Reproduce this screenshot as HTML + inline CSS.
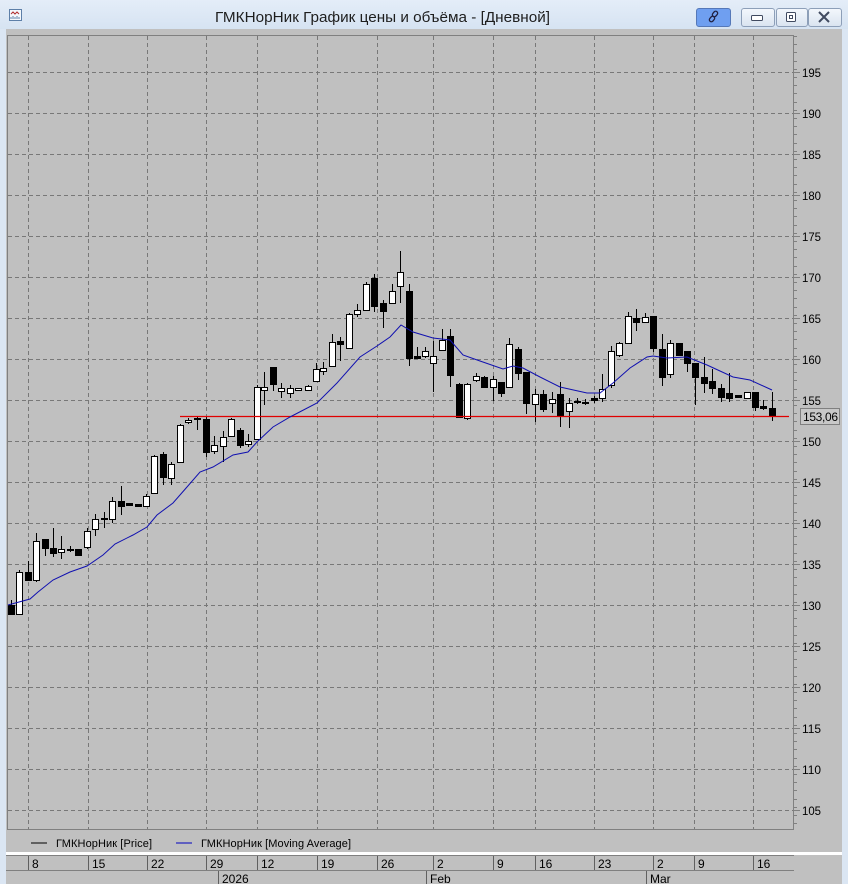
<!DOCTYPE html>
<html><head><meta charset="utf-8"><style>
html,body{margin:0;padding:0;width:848px;height:884px;overflow:hidden;background:#dbe6f3;font-family:"Liberation Sans",sans-serif}
#t{position:absolute;left:0;top:0;width:848px;height:29px;background:linear-gradient(#e4edf8,#d6e3f2)}
.b{position:absolute;top:8px;height:17px;border:1px solid #8d9fb8;border-radius:3px;background:linear-gradient(#f3f7fc,#dae4f0)}
svg{position:absolute;left:0;top:0}
</style></head><body>
<div id="t">
<div class="b" style="left:696px;width:33px;background:#6f9ff0;border-color:#5578b8"></div>
<div class="b" style="left:741px;width:32px"></div>
<div class="b" style="left:776px;width:30px"></div>
<div class="b" style="left:808px;width:32px"></div>
</div>
<svg id="s" width="848" height="884" xmlns="http://www.w3.org/2000/svg">
<text x="215" y="22" font-size="15" fill="#1e1e1e" textLength="335" lengthAdjust="spacingAndGlyphs">ГМКНорНик График цены и объёма - [Дневной]</text>
<rect x="9.5" y="9.5" width="12" height="11" fill="#f4f8fc" stroke="#5d7fa8"/>
<path d="M11 14 l2 -2 2 2 2 -2 2 2" fill="none" stroke="#b03030"/>
<path d="M11 19v-2M13 19v-3M15 19v-2M17 19v-3M19 19v-2" stroke="#5d7fa8"/>
<g fill="none" stroke="#202040" stroke-width="1.3">
<rect x="710" y="16" width="4" height="6" rx="2" transform="rotate(40 712 19)"/>
<rect x="713" y="11" width="4" height="6" rx="2" transform="rotate(40 715 14)"/>
</g>
<rect x="751.5" y="15.5" width="11" height="5" rx="1" fill="#fff" stroke="#404a60"/>
<rect x="786.5" y="12.5" width="9" height="9" rx="1" fill="#fff" stroke="#404a60"/>
<rect x="789.5" y="15.5" width="3" height="3" fill="none" stroke="#404a60"/>
<path d="M819 12 l10 10 M829 12 l-10 10" stroke="#404a60" stroke-width="2"/>
<rect x="6" y="29" width="836" height="855" fill="#c0c0c0"/>
<g id="grid"></g>
<rect x="7.5" y="35.5" width="786" height="794" fill="none" stroke="#808080"/>
<g id="c"></g>
<line x1="180" y1="416.5" x2="789" y2="416.5" stroke="#e00000" stroke-width="1.2"/>
<polyline fill="none" stroke="#1010b0" stroke-width="1" points="8,605 30,599 38,592 53,580 70,572 87,566 103,555 115,544 133,535 147,527 157,515 173,503 187,487 200,472 213,467 233,455 248,452 257,442 273,427 290,417 317,403 337,383 360,357 377,346 390,337 401,325 413,332 433,338 450,340 463,355 480,361 503,369 513,366 523,368 540,377 560,387 587,393 600,393 613,383 630,368 647,357 653,356 667,358 687,357 707,365 733,377 750,380 772,390"/>
<g id="ax" font-size="12" fill="#000"></g>
<rect x="800.5" y="408.5" width="39" height="16" fill="#c8c8c8" stroke="#808080"/>
<text x="803" y="421" font-size="12" textLength="35">153,06</text>
<line x1="31" y1="843" x2="47" y2="843" stroke="#000"/>
<text x="56" y="847" font-size="11" textLength="96">ГМКНорНик [Price]</text>
<line x1="176" y1="843" x2="192" y2="843" stroke="#0000c0"/>
<text x="201" y="847" font-size="11" textLength="150">ГМКНорНик [Moving Average]</text>
<rect x="6" y="852" width="836" height="3" fill="#fff"/>
<line x1="6" y1="855.5" x2="794" y2="855.5" stroke="#808080"/>
<line x1="6" y1="870.5" x2="794" y2="870.5" stroke="#808080"/>
<g id="tx" font-size="12"></g>
</svg>
<script>
var ns="http://www.w3.org/2000/svg";
function el(p,t,a,txt){var e=document.createElementNS(ns,t);for(var k in a)e.setAttribute(k,a[k]);if(txt)e.textContent=txt;document.getElementById(p).appendChild(e);return e;}
var vx=[28,88,147,206,257,317,377,433,493,535,594,653,694,753];
vx.forEach(function(x){el('grid','line',{x1:x+.5,y1:36,x2:x+.5,y2:829,stroke:'#787878','stroke-dasharray':'4,3'});});
for(var p=195;p>=105;p-=5){var y=Math.round(72+(195-p)*8.2);
el('grid','line',{x1:8,y1:y+.5,x2:793,y2:y+.5,stroke:'#787878','stroke-dasharray':'4,3'});
el('ax','line',{x1:794,y1:y+.5,x2:800,y2:y+.5,stroke:'#808080'});
el('ax','text',{x:802,y:y+5,textLength:19,lengthAdjust:'spacingAndGlyphs'},String(p));}
for(var q=36;q<829;q+=8.2){el('ax','line',{x1:794,y1:Math.round(q)+.5,x2:797,y2:Math.round(q)+.5,stroke:'#808080'});}
var d=[[11,605,614,600,614,1],[19,572,614,570,614,0],[28,572,580,561,580,1],[36,541,580,533,582,0],[45,539,548,539,556,1],[53,548,553,528,557,1],[61,549,552,536,559,0],[70,549,550,546,552,1],[78,549,555,549,555,1],[87,531,547,528,549,0],[95,519,529,514,536,0],[104,518,519,512,528,1],[112,501,519,497,523,0],[121,501,506,486,515,1],[129,503,505,503,505,1],[138,504,506,504,506,1],[146,496,506,494,506,0],[154,456,493,455,493,0],[163,454,477,452,485,1],[171,464,478,462,485,0],[180,425,462,424,462,0],[188,420,422,418,424,0],[197,418,419,417,430,1],[206,419,452,417,457,1],[214,445,451,436,454,0],[223,437,446,431,462,0],[231,419,436,418,436,0],[240,430,445,428,448,1],[248,441,444,434,447,0],[257,387,439,385,440,0],[264,387,390,372,405,0],[273,367,384,368,391,1],[281,388,391,383,398,0],[290,388,393,385,398,0],[298,388,390,388,390,0],[308,386,390,385,390,0],[316,369,381,363,381,0],[323,368,371,362,375,0],[332,342,366,334,367,0],[340,341,344,337,361,1],[349,314,348,313,348,0],[357,310,314,304,317,0],[366,284,310,282,310,0],[374,278,306,274,312,1],[383,303,311,300,328,1],[392,291,303,284,304,0],[400,272,286,251,303,0],[409,291,358,284,366,1],[417,356,358,347,358,1],[425,351,356,347,358,0],[433,356,363,341,392,0],[442,340,350,329,350,0],[450,336,375,329,387,1],[459,384,417,383,417,1],[467,384,418,383,420,0],[476,376,380,373,382,0],[484,377,387,376,387,1],[493,379,387,376,401,0],[501,382,393,382,397,1],[509,344,387,338,387,0],[518,349,373,347,380,1],[526,372,403,372,414,1],[535,394,404,389,422,0],[543,394,409,390,412,1],[552,399,403,392,413,0],[560,394,416,382,427,1],[569,403,411,398,428,0],[577,401,402,398,404,1],[585,402,403,399,405,1],[594,398,400,396,403,1],[602,389,398,374,402,0],[611,351,385,346,388,0],[619,343,355,342,357,0],[628,316,343,312,344,0],[636,318,322,309,331,1],[645,317,322,313,322,0],[653,316,348,316,352,1],[662,349,377,334,386,1],[670,343,374,340,378,0],[679,343,355,343,355,1],[687,351,363,351,372,1],[695,363,377,363,405,1],[704,377,383,357,393,1],[712,381,388,369,394,1],[721,388,397,384,402,1],[729,393,398,373,402,1],[738,395,397,395,397,1],[747,392,398,392,398,0],[755,392,407,392,411,1],[763,406,408,400,410,1],[772,408,416,392,421,1]];
d.forEach(function(c){
el('c','line',{x1:c[0]+.5,y1:c[3],x2:c[0]+.5,y2:c[4],stroke:'#000'});
var h=Math.max(1,c[2]-c[1]);
el('c','rect',{x:c[0]-2.5,y:c[1]+.5,width:6,height:h,fill:c[5]?'#000':'#fff',stroke:'#000'});});
var lb=['8','15','22','29','12','19','26','2','9','16','23','2','9','16'];
vx.forEach(function(x,i){el('tx','line',{x1:x+.5,y1:856,x2:x+.5,y2:870,stroke:'#606060'});el('tx','text',{x:x+4,y:868},lb[i]);});
[[218,'2026'],[426,'Feb'],[646,'Mar']].forEach(function(m){el('tx','line',{x1:m[0]+.5,y1:871,x2:m[0]+.5,y2:884,stroke:'#606060'});el('tx','text',{x:m[0]+4,y:883},m[1]);});
</script>
</body></html>
